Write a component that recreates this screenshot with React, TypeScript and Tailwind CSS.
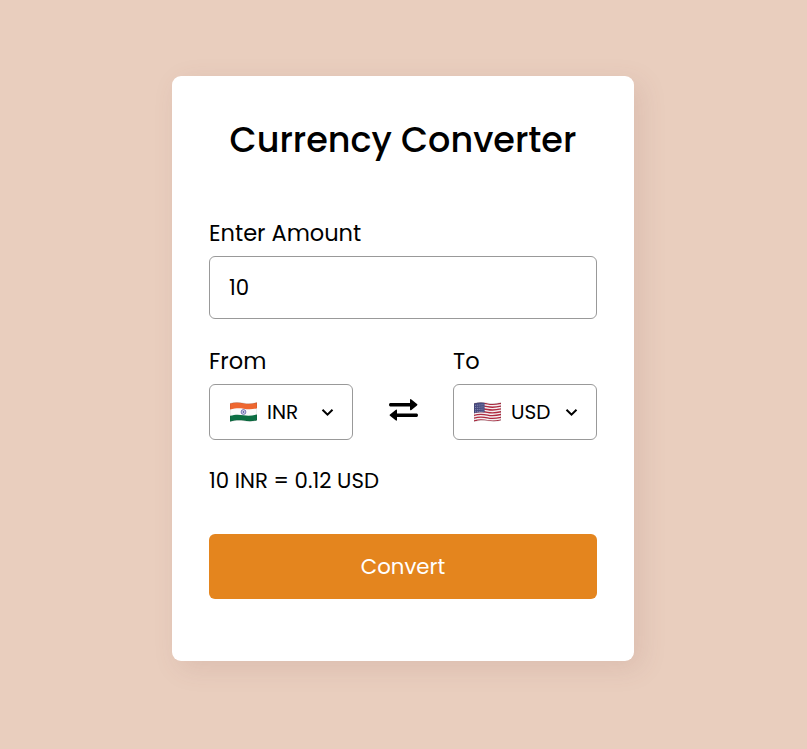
import { ReactNode } from "react";

const wave =
  "M0 1.500C4.500 0 9 .2 13.500 1.200S22 1.800 27 .6V18.200C22.500 19.600 18 19.400 13.500 18.600S5 18.200 0 19.600Z";

function IndiaFlag() {
  return (
    <svg width="27" height="20" viewBox="0 0 27 20" className="block shrink-0">
      <defs>
        <clipPath id="in-wave"><path d={wave} /></clipPath>
      </defs>
      <g clipPath="url(#in-wave)">
        <rect width="27" height="20" fill="#fafafa" />
        <path d="M0 0H27V6.300C22 7.700 18 7.600 13.500 6.700S5 6.300 0 7.600Z" fill="#ee6730" />
        <path d="M0 13.800C5 12.300 9 12.400 13.500 13.200S22 13.700 27 12.400V20H0Z" fill="#0b6e42" />
        <circle cx="13.500" cy="10" r="2.400" fill="#d3d5ea" stroke="#5557a3" strokeWidth=".8" />
        <circle cx="13.500" cy="10" r=".8" fill="#30358c" />
      </g>
      <path d={wave} fill="none" stroke="#000" strokeOpacity=".12" strokeWidth="1" />
    </svg>
  );
}

function UsaFlag() {
  return (
    <svg width="27" height="20" viewBox="0 0 27 20" className="block shrink-0">
      <defs>
        <clipPath id="us-wave"><path d={wave} /></clipPath>
      </defs>
      <g clipPath="url(#us-wave)">
        <rect width="27" height="20" fill="#f4f1f3" />
        {[0, 1, 2, 3, 4, 5, 6].map((i) => (
          <path
            key={i}
            transform={`translate(0 ${i * 2.8})`}
            d="M0 2.200C4.500.7 9 .9 13.500 1.900S22 2.500 27 1.300"
            fill="none"
            stroke="#b02a40"
            strokeWidth="1.350"
          />
        ))}
        <path d="M0 0H10.600V10.400C7 9.900 4 10.200 0 11.200Z" fill="#484b80" />
        <path
          d="M1 3.400L10 2.600M1 5.600L10 4.800M1 7.800L10 7M1 9.900L10 9.100"
          stroke="#bfc1dc"
          strokeWidth=".7"
          strokeDasharray=".8 1.100"
        />
      </g>
      <path d={wave} fill="none" stroke="#000" strokeOpacity=".12" strokeWidth="1" />
    </svg>
  );
}

function CurrencySelect({ label, code, flag }: { label: string; code: string; flag: ReactNode }) {
  return (
    <div className="w-36">
      <div className="h-[33px] text-[22.5px] leading-[33px]">{label}</div>
      <button className="mt-1.5 flex h-14 w-full items-center rounded-md border border-[#999] bg-white pl-5 pr-[18px]">
        {flag}
        <span className="ml-2.5 text-left text-[20px] leading-7">{code}</span>
        <svg width="13" height="9" viewBox="0 0 13 9" fill="none" className="ml-auto block">
          <path d="M1.500 1.700L6.500 6.700L11.500 1.700" stroke="#000" strokeWidth="2" />
        </svg>
      </button>
    </div>
  );
}

export default function App() {
  return (
    <main className="flex h-[749px] w-full justify-center bg-[#e9cebe] pr-px pt-[76px] font-['Poppins','Inter',sans-serif] text-black">
      <section className="h-[585px] w-[462px] rounded-[9px] bg-white px-[37px] pt-[37px] shadow-[7px_7px_27px_rgba(130,75,80,0.13)]">
        <h1 className="h-[54px] whitespace-nowrap text-center text-[35px] font-medium leading-[54px]">Currency Converter</h1>
        <label className="mt-[50px] block h-[33px] text-[22.5px] leading-[33px]" htmlFor="amount">Enter Amount</label>
        <input
          id="amount"
          defaultValue="10"
          className="mt-1.5 block h-[63px] w-full rounded-md border border-[#999] px-[19px] text-[21.25px] outline-none"
        />
        <div className="mt-[26px] flex justify-between">
          <CurrencySelect label="From" code="INR" flag={<IndiaFlag />} />
          <svg width="29" height="22" viewBox="0 0 29 22" className="mt-[54px] block">
            <path
              d="M1.300 4H21V1.200Q21-.6 22.400.6L28 5.100Q28.800 5.700 28 6.400L22.400 10.900Q21 12 21 10.200V7.400H1.300Q0 7.400 0 5.700T1.300 4ZM27.600 14.500H8V11.700Q8 9.900 6.600 11L1 15.500Q.2 16.200 1 16.800L6.600 21.300Q8 22.400 8 20.700V18H27.600Q29 18 29 16.200T27.600 14.500Z"
              fill="#000"
            />
          </svg>
          <CurrencySelect label="To" code="USD" flag={<UsaFlag />} />
        </div>
        <p className="mt-6 h-[33px] text-[21.25px] leading-[33px]">10 INR = 0.12 USD</p>
        <button className="mt-[37px] block h-[65px] w-full rounded-md bg-[#e4851e] text-[21.25px] text-white">Convert</button>
      </section>
    </main>
  );
}
